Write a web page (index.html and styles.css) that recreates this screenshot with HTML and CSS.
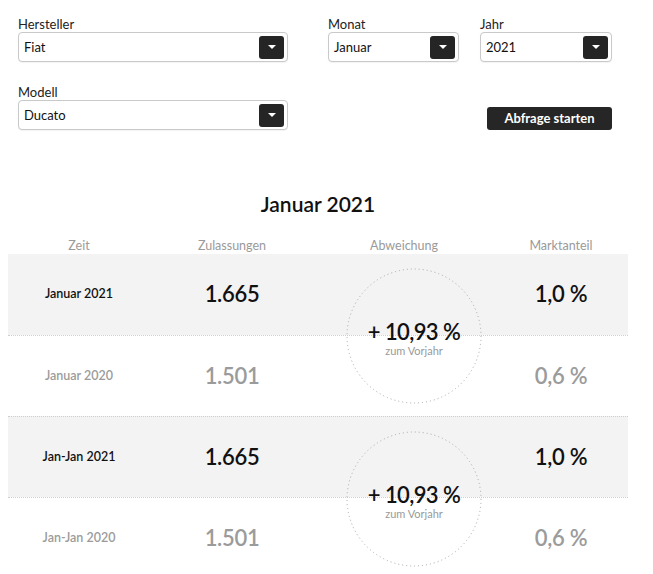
FILE: index.html
```html
<!DOCTYPE html>
<html lang="de">
<head>
<meta charset="utf-8">
<link rel="stylesheet" href="styles.css">
</head>
<body>
<div class="page">
  <form class="filters">
    <div class="filter-row">
      <div class="field field-wide">
        <label class="field-label">Hersteller</label>
        <div class="select"><span class="select-value">Fiat</span><span class="select-btn"><span class="caret"></span></span></div>
      </div>
      <div class="field field-month">
        <label class="field-label">Monat</label>
        <div class="select"><span class="select-value">Januar</span><span class="select-btn"><span class="caret"></span></span></div>
      </div>
      <div class="field field-year">
        <label class="field-label">Jahr</label>
        <div class="select"><span class="select-value">2021</span><span class="select-btn"><span class="caret"></span></span></div>
      </div>
    </div>
    <div class="filter-row filter-row-2">
      <div class="field field-wide">
        <label class="field-label">Modell</label>
        <div class="select"><span class="select-value">Ducato</span><span class="select-btn"><span class="caret"></span></span></div>
      </div>
      <button type="button" class="submit">Abfrage starten</button>
    </div>
  </form>

  <h2 class="title">Januar 2021</h2>

  <div class="stats">
    <div class="row head">
      <div class="cell">Zeit</div>
      <div class="cell">Zulassungen</div>
      <div class="cell">Abweichung</div>
      <div class="cell">Marktanteil</div>
    </div>

    <div class="group">
      <div class="row current">
        <div class="cell period">Januar 2021</div>
        <div class="cell value">1.665</div>
        <div class="cell"></div>
        <div class="cell value">1,0 %</div>
      </div>
      <div class="row previous">
        <div class="cell period">Januar 2020</div>
        <div class="cell value">1.501</div>
        <div class="cell"></div>
        <div class="cell value">0,6 %</div>
      </div>
      <div class="delta">
        <svg class="ring" width="136" height="136" viewBox="0 0 136 136"><circle cx="68" cy="68" r="67" fill="none" stroke="#a8a8a8" stroke-width="1" stroke-dasharray="1 3"/></svg>
        <div class="delta-value">+ 10,93 %</div>
        <div class="delta-note">zum Vorjahr</div>
      </div>
    </div>

    <div class="group">
      <div class="row current sep">
        <div class="cell period">Jan-Jan 2021</div>
        <div class="cell value">1.665</div>
        <div class="cell"></div>
        <div class="cell value">1,0 %</div>
      </div>
      <div class="row previous">
        <div class="cell period">Jan-Jan 2020</div>
        <div class="cell value">1.501</div>
        <div class="cell"></div>
        <div class="cell value">0,6 %</div>
      </div>
      <div class="delta">
        <svg class="ring" width="136" height="136" viewBox="0 0 136 136"><circle cx="68" cy="68" r="67" fill="none" stroke="#a8a8a8" stroke-width="1" stroke-dasharray="1 3"/></svg>
        <div class="delta-value">+ 10,93 %</div>
        <div class="delta-note">zum Vorjahr</div>
      </div>
    </div>
  </div>
</div>
</body>
</html>
```
FILE: styles.css
```css
* { box-sizing: border-box; }
html, body { background: #fff; }
body {
  margin: 8px;
  font-family: Lato, "Source Sans Pro", "Noto Sans", sans-serif;
  color: #111;
}
.page { width: 620px; }

.filters {
  padding: 8px 0 0 10px;
  display: flex;
  flex-direction: column;
  gap: 22px;
}
.filter-row { display: flex; align-items: flex-end; }
.field { display: flex; flex-direction: column; }
.field-label {
  font-size: 13px;
  line-height: 16px;
  color: #222;
}
.field-wide { width: 270px; }
.field-month { width: 131px; margin-left: 40px; }
.field-year { width: 132px; margin-left: 21px; }

.select {
  height: 30px;
  border: 1px solid #c9c9c9;
  border-radius: 4px;
  background: #fff;
  display: flex;
  align-items: center;
  justify-content: space-between;
  padding: 0 3px 0 5px;
  box-shadow: 0 1px 1px rgba(0,0,0,0.05);
}
.select-value { font-size: 13px; color: #111; }
.select-btn {
  width: 25px;
  height: 23px;
  background: #252525;
  border-radius: 3px;
  display: flex;
  align-items: center;
  justify-content: center;
}
.caret {
  width: 0; height: 0;
  border-left: 4px solid transparent;
  border-right: 4px solid transparent;
  border-top: 4px solid #fff;
}
.filter-row-2 { align-items: center; }
.filter-row-2 .submit { margin-top: 22px; }
.submit {
  margin-left: 199px;
  width: 125px;
  height: 23px;
  border: none;
  border-radius: 3px;
  background: #262626;
  color: #fff;
  font-family: inherit;
  font-weight: 700;
  font-size: 13px;
  padding: 0;
  cursor: pointer;
}

.title {
  margin: 62px 0 0;
  text-align: center;
  font-size: 21px;
  line-height: 24px;
  font-weight: 600;
  color: #111;
}

.stats { margin-top: 20px; }
.row {
  display: grid;
  grid-template-columns: 142px 164px 180px 134px;
  align-items: center;
  text-align: center;
}
.row.head {
  height: 18px;
  font-size: 12.5px;
  color: #9a9a9a;
}
.group { position: relative; }
.group .row { height: 81px; padding-bottom: 2px; }
.row.current { background: #f3f3f3; }
.row.previous { border-top: 1px dotted #cfcfcf; }
.row.sep { border-top: 1px dotted #cfcfcf; }

.period { font-size: 12.5px; font-weight: 600; }
.value { font-size: 22px; font-weight: 600; letter-spacing: -0.3px; }
.previous .cell { color: #9b9b9b; }

.delta {
  position: absolute;
  left: 338px;
  top: 14px;
  width: 136px;
  height: 136px;
  display: flex;
  flex-direction: column;
  align-items: center;
  justify-content: center;
  padding-top: 6px;
}
.group + .group .delta { top: 15px; }
.ring { position: absolute; left: 0; top: 0; }
.delta-value {
  font-size: 22px;
  font-weight: 600;
  line-height: 24px;
  letter-spacing: -0.6px;
  color: #111;
}
.delta-note {
  font-size: 11px;
  line-height: 14px;
  color: #9a9a9a;
}
```
